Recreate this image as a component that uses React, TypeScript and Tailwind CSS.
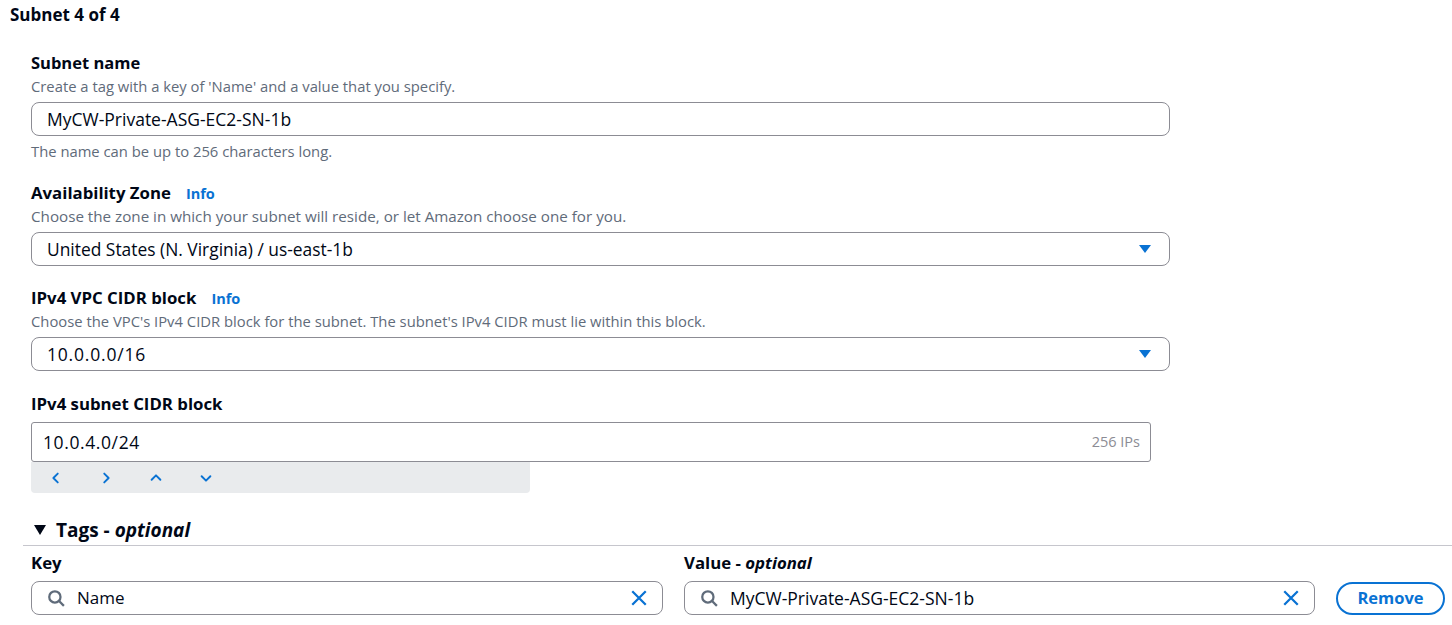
import React from 'react';

const Caret = () => (
  <svg width="14" height="10" viewBox="0 0 14 10">
    <path d="M1 1h12L7 9z" fill="#0972d3" />
  </svg>
);

const SearchIcon = () => (
  <svg width="18" height="18" viewBox="0 0 16 16" fill="none" stroke="#5f6b7a" strokeWidth="2">
    <circle cx="7" cy="7" r="5" />
    <path d="M10.5 10.5L15 15" />
  </svg>
);

const ClearIcon = () => (
  <svg width="18" height="18" viewBox="0 0 16 16" fill="none" stroke="#0972d3" strokeWidth="2">
    <path d="M2 2l12 12M14 2L2 14" />
  </svg>
);

const Chevron = ({ d }: { d: string }) => (
  <svg width="14" height="14" viewBox="0 0 16 16" fill="none" stroke="#0972d3" strokeWidth="2.2" strokeLinecap="round" strokeLinejoin="round">
    <path d={d} />
  </svg>
);

const Info = () => <span className="ml-[15px] text-[14.5px] font-bold text-[#0972d3]">Info</span>;

const App: React.FC = () => {
  return (
    <div className="min-h-screen w-[1452px] bg-white text-[#000716] font-['Open_Sans',sans-serif] overflow-hidden">
      <div className="pl-[10px] pt-[4px] text-[17px] font-bold leading-[22px]">Subnet 4 of 4</div>

      <div className="pl-[31px]">
        {/* Subnet name */}
        <div className="mt-[26px] text-[16.5px] font-bold leading-[22px]">Subnet name</div>
        <div className="mt-[2px] text-[14.8px] leading-[20px] text-[#5f6b7a]">Create a tag with a key of 'Name' and a value that you specify.</div>
        <div className="mt-[6px] w-[1139px] h-[34px] border border-[#8c8c94] rounded-[8px] flex items-center pl-[15px] text-[17.5px]">
          MyCW-Private-ASG-EC2-SN-1b
        </div>
        <div className="mt-[5px] text-[14.8px] leading-[20px] text-[#5f6b7a]">The name can be up to 256 characters long.</div>

        {/* Availability Zone */}
        <div className="mt-[21px] flex items-baseline text-[16.8px] font-bold leading-[22px]">
          Availability Zone <Info />
        </div>
        <div className="mt-[1px] text-[15.2px] leading-[20px] text-[#5f6b7a]">Choose the zone in which your subnet will reside, or let Amazon choose one for you.</div>
        <div className="mt-[6px] w-[1139px] h-[34px] border border-[#8c8c94] rounded-[8px] flex items-center justify-between pl-[15px] pr-[17px] text-[17.4px]">
          <span>United States (N. Virginia) / us-east-1b</span>
          <Caret />
        </div>

        {/* VPC CIDR */}
        <div className="mt-[21px] flex items-baseline text-[16.8px] font-bold leading-[22px]">
          IPv4 VPC CIDR block <Info />
        </div>
        <div className="mt-[1px] text-[14.8px] leading-[20px] text-[#5f6b7a]">Choose the VPC's IPv4 CIDR block for the subnet. The subnet's IPv4 CIDR must lie within this block.</div>
        <div className="mt-[6px] w-[1139px] h-[34px] border border-[#8c8c94] rounded-[8px] flex items-center justify-between pl-[15px] pr-[17px] text-[17.5px]">
          <span className="tracking-[0.8px]">10.0.0.0/16</span>
          <Caret />
        </div>

        {/* Subnet CIDR */}
        <div className="mt-[22px] text-[16.8px] font-bold leading-[22px]">IPv4 subnet CIDR block</div>
        <div className="mt-[7px] w-[1120px] h-[40px] border border-[#8c8c94] rounded-[3px] flex items-center justify-between pl-[11px] pr-[10px]">
          <span className="text-[17.5px] tracking-[0.6px]">10.0.4.0/24</span>
          <span className="text-[14.5px] text-[#8c8c94]">256 IPs</span>
        </div>
        <div className="w-[499px] h-[31px] bg-[#e9ebed] rounded-b-[4px] flex items-center pl-[18px] gap-[36px]">
          <Chevron d="M10 3L5 8l5 5" />
          <Chevron d="M6 3l5 5-5 5" />
          <Chevron d="M3 10l5-5 5 5" />
          <Chevron d="M3 6l5 5 5-5" />
        </div>
      </div>

      {/* Tags */}
      <div className="mt-[25px] pl-[34px] flex items-center gap-[10px] text-[19px] font-bold leading-[24px]">
        <svg width="12" height="10" viewBox="0 0 12 10">
          <path d="M0 0h12L6 10z" fill="#000716" />
        </svg>
        <span>
          Tags - <i>optional</i>
        </span>
      </div>
      <div className="ml-[23px] mt-[3px] border-t border-[#c6c6cd]" />

      <div className="pl-[31px] mt-[6px] flex items-end gap-[21px]">
        <div className="w-[632px]">
          <div className="text-[16.8px] font-bold leading-[22px]">Key</div>
          <div className="mt-[7px] h-[34px] border border-[#8c8c94] rounded-[8px] flex items-center pl-[15px] pr-[14px]">
            <SearchIcon />
            <span className="ml-[12px] flex-1 text-[17px]">Name</span>
            <ClearIcon />
          </div>
        </div>
        <div className="w-[631px]">
          <div className="text-[16.8px] font-bold leading-[22px]">
            Value - <i>optional</i>
          </div>
          <div className="mt-[7px] h-[34px] border border-[#8c8c94] rounded-[8px] flex items-center pl-[15px] pr-[14px]">
            <SearchIcon />
            <span className="ml-[12px] flex-1 text-[17.5px]">MyCW-Private-ASG-EC2-SN-1b</span>
            <ClearIcon />
          </div>
        </div>
        <button className="w-[109px] h-[33px] border-2 border-[#0972d3] rounded-full text-[16.5px] font-bold text-[#0972d3] flex items-center justify-center">
          Remove
        </button>
      </div>
    </div>
  );
};

export default App;
